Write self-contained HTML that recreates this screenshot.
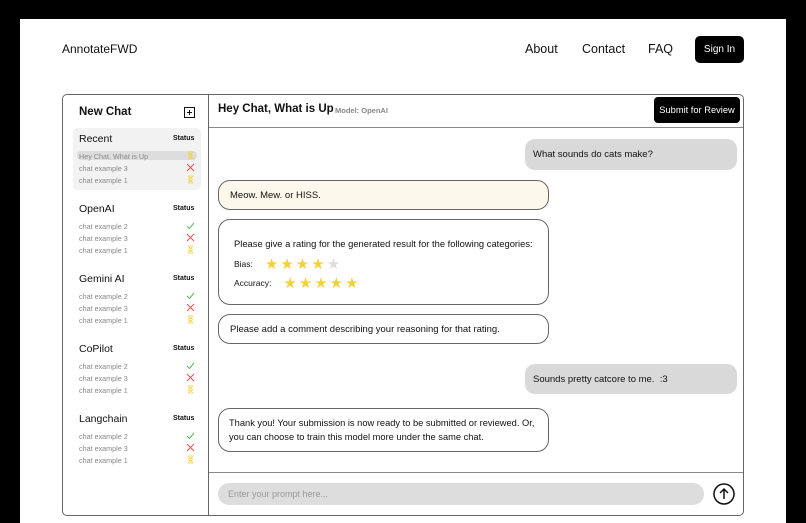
<!DOCTYPE html>
<html><head><meta charset="utf-8"><style>
*{box-sizing:border-box;margin:0;padding:0}
body{width:806px;height:523px;background:#000;position:relative;overflow:hidden;font-family:"Liberation Sans",sans-serif;color:#111}
.a{position:absolute}
.page{left:20px;top:19px;width:766px;height:504px;background:#fff}
.nav{font-size:12.5px}
.btn{background:#000;color:#fff;border-radius:4px;font-size:10px;display:flex;align-items:center;justify-content:center}
.box{left:62px;top:94px;width:682px;height:422px;border:1px solid #666;border-radius:5px}
.sh{font-size:10.5px;font-weight:normal}
.st{font-size:7px;font-weight:bold}
.it{font-size:7.2px;color:#888}
.bub{border:1px solid #666;border-radius:12px;font-size:9.5px;padding:0 11px;display:flex;align-items:center;background:#fff}
.ub{background:#d9d9d9;border-radius:10px;font-size:9.5px;padding:0 8px;display:flex;align-items:center}
.star{color:#f2d13b;font-size:15px;letter-spacing:2px}
</style></head><body>
<div class="a page"></div>
<div class="a nav" style="left:62px;top:42px;font-size:12px">AnnotateFWD</div>
<div class="a nav" style="left:525px;top:42px">About</div>
<div class="a nav" style="left:582px;top:42px">Contact</div>
<div class="a nav" style="left:648px;top:42px">FAQ</div>
<div class="a btn" style="left:695px;top:36px;width:49px;height:27px;border-radius:5px">Sign In</div>

<div class="a box"></div>
<div class="a" style="left:208px;top:95px;width:1px;height:420px;background:#666"></div>
<div class="a" style="left:209px;top:127px;width:534px;height:1px;background:#888"></div>
<div class="a" style="left:209px;top:472px;width:534px;height:1px;background:#888"></div>

<div class="a" style="left:79px;top:106px;font-size:11.5px;font-weight:bold">New Chat</div>
<svg class="a" style="left:184px;top:107px" width="11" height="11" viewBox="0 0 11 11"><rect x=".5" y=".5" width="10" height="10" fill="none" stroke="#111"/><path d="M5.5 3v5M3 5.5h5" stroke="#111"/></svg>
<div class="a" style="left:73px;top:128px;width:128px;height:62px;background:#f2f2f2;border-radius:5px"></div>
<div class="a" style="left:77px;top:151px;width:120px;height:9px;background:#ddd;border-radius:4px"></div>

<div id="side"></div>

<div class="a" style="left:218px;top:103px;font-size:11.5px;font-weight:bold">Hey Chat, What is Up</div>
<div class="a" style="left:335px;top:106px;font-size:7.5px;color:#888;font-weight:bold">Model: OpenAI</div>
<div class="a btn" style="left:654px;top:97px;width:86px;height:26px;font-size:9.3px">Submit for Review</div>

<div class="a ub" style="left:525px;top:139px;width:212px;height:31px">What sounds do cats make?</div>
<div class="a bub" style="left:218px;top:180px;width:331px;height:30px;background:#fdf8ec">Meow. Mew. or HISS.</div>
<div class="a bub" style="left:218px;top:219px;width:331px;height:86px;display:block;padding:18px 15px">
<div style="font-size:9.4px">Please give a rating for the generated result for the following categories:</div>
<div style="font-size:8.5px;margin-top:6px;display:flex;align-items:center">Bias:<span class="star" style="margin-left:12px">★★★★</span><span class="star" style="color:#ddd">★</span></div>
<div style="font-size:8.5px;margin-top:1px;display:flex;align-items:center">Accuracy:<span class="star" style="margin-left:12px">★★★★★</span></div>
</div>
<div class="a bub" style="left:218px;top:314px;width:331px;height:30px">Please add a comment describing your reasoning for that rating.</div>
<div class="a ub" style="left:525px;top:364px;width:212px;height:30px">Sounds pretty catcore to me.&nbsp; :3</div>
<div class="a bub" style="left:218px;top:408px;width:331px;height:44px;line-height:14px;font-size:9.3px;padding:0 8px 0 10px">Thank you! Your submission is now ready to be submitted or reviewed. Or, you can choose to train this model more under the same chat.</div>

<div class="a" style="left:218px;top:483px;width:486px;height:22px;background:#ddd;border-radius:11px;font-size:9px;color:#999;padding:6px 10px">Enter your prompt here...</div>
<svg class="a" style="left:713px;top:483px" width="22" height="22" viewBox="0 0 22 22"><circle cx="11" cy="11" r="10" fill="none" stroke="#111" stroke-width="1.5"/><path d="M11 16V6M7 10l4-4 4 4" fill="none" stroke="#111" stroke-width="1.5"/></svg>

<script>
var secs=[["Recent",["Hey Chat, What is Up","chat example 3","chat example 1"],["p","x","p"]],["OpenAI",["chat example 2","chat example 3","chat example 1"],["c","x","p"]],["Gemini AI",["chat example 2","chat example 3","chat example 1"],["c","x","p"]],["CoPilot",["chat example 2","chat example 3","chat example 1"],["c","x","p"]],["Langchain",["chat example 2","chat example 3","chat example 1"],["c","x","p"]]];
var ic={c:'<svg width="9" height="9" viewBox="0 0 9 9"><path d="M1 5l2.5 2.5L8 2" fill="none" stroke="#5cb85c"/></svg>',x:'<svg width="9" height="9" viewBox="0 0 9 9"><path d="M1 1l7 7M8 1l-7 7" stroke="#e05555"/></svg>',p:'<svg width="9" height="9" viewBox="0 0 9 9"><path d="M2 1h5M2 8h5M2.5 1c0 2.5 4 2.5 4 3.5S2.5 5.5 2.5 8M6.5 1c0 2.5-4 2.5-4 3.5s4 1 4 3.5" fill="none" stroke="#f2d13b" stroke-width=".8"/></svg>'};
var h="";secs.forEach(function(s,i){var y=133+i*70;h+='<div class="a sh" style="left:79px;top:'+y+'px">'+s[0]+'</div><div class="a st" style="left:173px;top:'+(y+2)+'px">Status</div>';
s[1].forEach(function(t,j){var yy=y+19+j*12;h+='<div class="a it" style="left:79px;top:'+yy+'px">'+t+'</div><div class="a" style="left:186px;top:'+(yy-1)+'px;line-height:0">'+ic[s[2][j]]+'</div>';});});
document.getElementById("side").innerHTML=h;
</script>
</body></html>
